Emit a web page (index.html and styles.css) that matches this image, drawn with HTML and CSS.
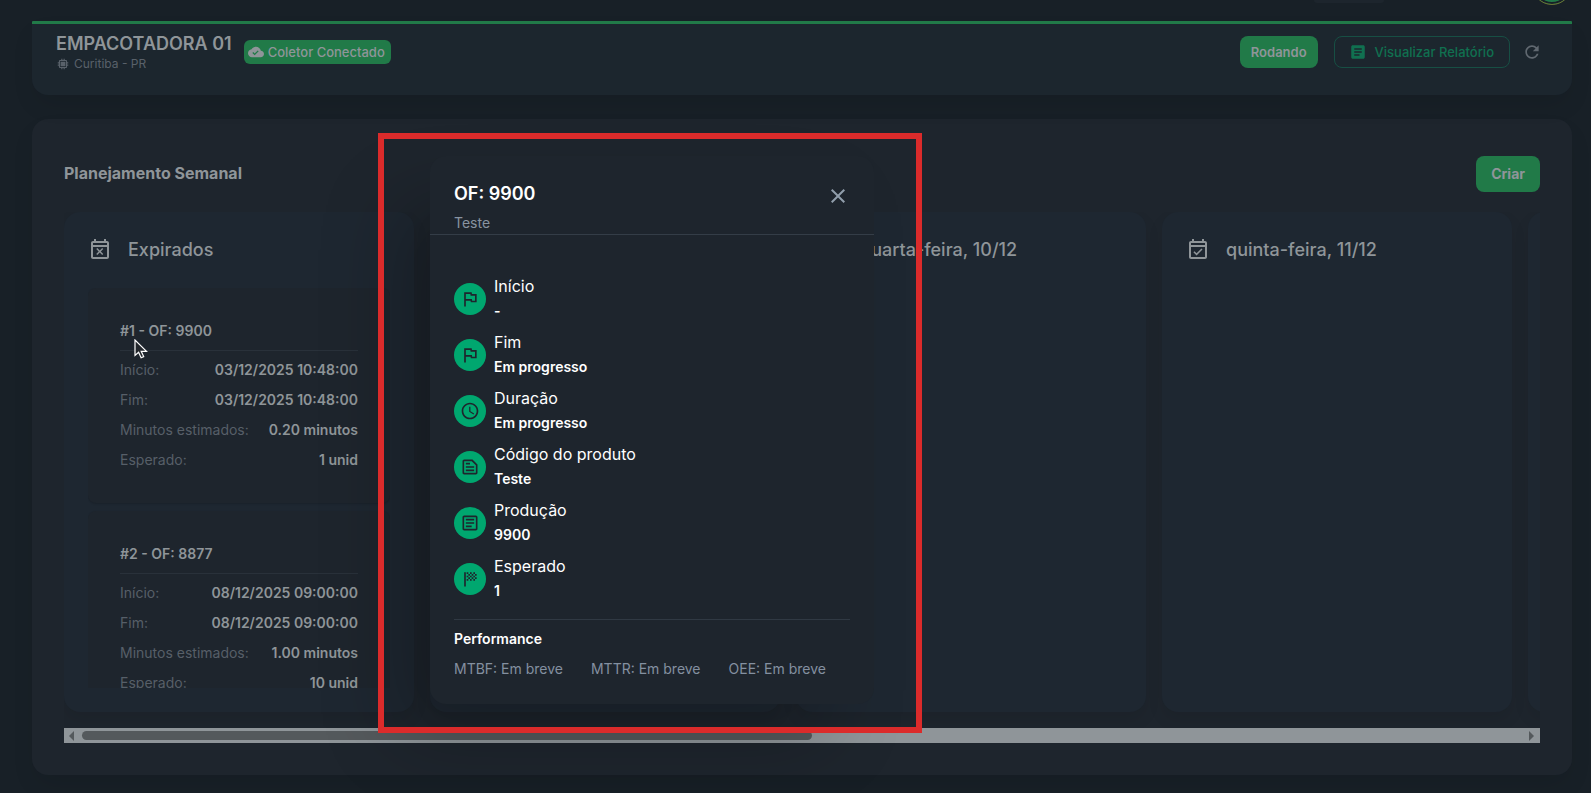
FILE: index.html
```html
<!DOCTYPE html>
<html lang="pt-BR">
<head>
<meta charset="utf-8">
<meta name="viewport" content="width=device-width, initial-scale=1">
<title>Empacotadora 01</title>
<link rel="stylesheet" href="styles.css">
</head>
<body>
<svg class="sprite" aria-hidden="true">
  <symbol id="i-flag" viewBox="0 0 24 24"><path d="m12.36 6 .4 2H18v6h-3.36l-.4-2H7V6h5.36M14 4H5v17h2v-7h5.6l.4 2h7V6h-5.6L14 4z"/></symbol>
  <symbol id="i-clock" viewBox="0 0 24 24"><path d="M11.99 2C6.47 2 2 6.48 2 12s4.47 10 9.99 10C17.52 22 22 17.52 22 12S17.52 2 11.99 2zM12 20c-4.42 0-8-3.58-8-8s3.58-8 8-8 8 3.58 8 8-3.58 8-8 8zm.5-13H11v6l5.25 3.15.75-1.23-4.5-2.67z"/></symbol>
  <symbol id="i-note" viewBox="0 0 24 24"><path d="M15 3H5c-1.100 0-1.990.9-1.990 2L3 19c0 1.100.89 2 1.990 2H19c1.100 0 2-.9 2-2V9l-6-6zM5 19V5h9l5 5v9H5zM7 7h5v2H7zm0 8h10v2H7zm0-4h10v2H7z"/></symbol>
  <symbol id="i-list" viewBox="0 0 24 24"><path d="M19 5v14H5V5h14m0-2H5c-1.100 0-2 .9-2 2v14c0 1.100.9 2 2 2h14c1.100 0 2-.9 2-2V5c0-1.100-.9-2-2-2zm-5 14H7v-2h7v2zm3-4H7v-2h10v2zm0-4H7V7h10v2z"/></symbol>
  <symbol id="i-finish" viewBox="0 0 24 24"><path d="M5 4h2v17H5zM8 4h2v2H8zm4 0h2v2h-2zm4 0h2v2h-2zm-6 2h2v2h-2zm4 0h2v2h-2zm4 0h2v2h-2zM8 8h2v2H8zm4 0h2v2h-2zm4 0h2v2h-2zm-6 2h2v2h-2zm4 0h2v2h-2zm4 0h2v2h-2zM8 12h2v2H8zm4 0h2v2h-2zm4 0h2v2h-2z"/></symbol>
  <symbol id="i-article" viewBox="0 0 24 24"><path d="M19 3H5c-1.100 0-2 .9-2 2v14c0 1.100.9 2 2 2h14c1.100 0 2-.9 2-2V5c0-1.100-.9-2-2-2zm-5 14H7v-2h7v2zm3-4H7v-2h10v2zm0-4H7V7h10v2z"/></symbol>
  <symbol id="i-refresh" viewBox="0 0 24 24"><path d="M17.650 6.350C16.200 4.900 14.210 4 12 4c-4.420 0-7.990 3.580-7.990 8s3.570 8 7.990 8c3.730 0 6.840-2.550 7.730-6h-2.080c-.82 2.330-3.040 4-5.650 4-3.310 0-6-2.690-6-6s2.690-6 6-6c1.660 0 3.140.69 4.220 1.780L13 11h7V4l-2.350 2.350z"/></symbol>
  <symbol id="i-cloud" viewBox="0 0 24 24"><path d="M19.350 10.040C18.670 6.590 15.640 4 12 4 9.110 4 6.600 5.640 5.350 8.040 2.340 8.360 0 10.910 0 14c0 3.310 2.690 6 6 6h13c2.760 0 5-2.240 5-5 0-2.640-2.050-4.780-4.650-4.960zM10 17l-3.500-3.500 1.410-1.410L10 14.170l4.600-4.600 1.410 1.410L10 17z"/></symbol>
  <symbol id="i-chip" viewBox="0 0 24 24"><path d="M8 8h8v8H8zM21 11V9h-2V7c0-1.100-.9-2-2-2h-2V3h-2v2h-2V3H9v2H7c-1.100 0-2 .9-2 2v2H3v2h2v2H3v2h2v2c0 1.100.9 2 2 2h2v2h2v-2h2v2h2v-2h2c1.100 0 2-.9 2-2v-2h2v-2h-2v-2h2zm-4 6H7V7h10v10z"/></symbol>
  <symbol id="i-busy" viewBox="0 0 24 24"><path d="M9.310 17l2.440-2.440L14.190 17l1.060-1.060-2.440-2.440 2.440-2.440L14.190 10l-2.440 2.440L9.310 10l-1.060 1.060 2.440 2.440-2.440 2.440L9.310 17zM19 3h-1V1h-2v2H8V1H6v2H5c-1.110 0-1.990.9-1.990 2L3 19c0 1.100.89 2 2 2h14c1.100 0 2-.9 2-2V5c0-1.100-.9-2-2-2zm0 16H5V9h14v10zM5 7V5h14v2H5z"/></symbol>
  <symbol id="i-avail" viewBox="0 0 24 24"><path d="M19 3h-1V1h-2v2H8V1H6v2H5c-1.110 0-2 .9-2 2v14c0 1.100.89 2 2 2h14c1.100 0 2-.9 2-2V5c0-1.100-.9-2-2-2zm0 16H5V9h14v10zM5 7V5h14v2H5zm5.560 10.460 5.940-5.930-1.070-1.060-4.870 4.870-2.110-2.110-1.060 1.060z"/></symbol>
  <symbol id="i-close" viewBox="0 0 24 24"><path d="M19 6.410 17.590 5 12 10.590 6.410 5 5 6.410 10.590 12 5 17.590 6.410 19 12 13.410 17.590 19 19 17.590 13.410 12z"/></symbol>
</svg>

<div class="topbar">
  <span class="topbar-chip"></span>
  <span class="avatar"></span>
</div>

<main class="page">
  <header class="machine">
    <div class="machine-id">
      <h1>EMPACOTADORA 01</h1>
      <p class="place"><svg class="icon s14"><use href="#i-chip"/></svg>Curitiba - PR</p>
    </div>
    <span class="badge"><svg class="icon s16"><use href="#i-cloud"/></svg>Coletor Conectado</span>
    <div class="actions">
      <button class="btn btn-state" type="button">Rodando</button>
      <button class="btn btn-outline" type="button"><svg class="icon s18"><use href="#i-article"/></svg>Visualizar Relatório</button>
      <button class="btn-icon" type="button" aria-label="Atualizar"><svg class="icon s20"><use href="#i-refresh"/></svg></button>
    </div>
  </header>

  <section class="plan">
    <div class="plan-head">
      <h2>Planejamento Semanal</h2>
      <button class="btn btn-create" type="button">Criar</button>
    </div>
    <div class="board">
      <section class="column">
        <h3><svg class="icon s24"><use href="#i-busy"/></svg>Expirados</h3>
        <div class="orders">
          <article class="order">
            <h4>#1 - OF: 9900</h4>
            <dl>
              <div><dt>Início:</dt><dd>03/12/2025 10:48:00</dd></div>
              <div><dt>Fim:</dt><dd>03/12/2025 10:48:00</dd></div>
              <div><dt>Minutos estimados:</dt><dd>0.20 minutos</dd></div>
              <div><dt>Esperado:</dt><dd>1 unid</dd></div>
            </dl>
          </article>
          <article class="order">
            <h4>#2 - OF: 8877</h4>
            <dl>
              <div><dt>Início:</dt><dd>08/12/2025 09:00:00</dd></div>
              <div><dt>Fim:</dt><dd>08/12/2025 09:00:00</dd></div>
              <div><dt>Minutos estimados:</dt><dd>1.00 minutos</dd></div>
              <div><dt>Esperado:</dt><dd>10 unid</dd></div>
            </dl>
          </article>
        </div>
      </section>
      <section class="column"></section>
      <section class="column">
        <h3><svg class="icon s24"><use href="#i-avail"/></svg>quarta-feira, 10/12</h3>
      </section>
      <section class="column">
        <h3><svg class="icon s24"><use href="#i-avail"/></svg>quinta-feira, 11/12</h3>
      </section>
      <section class="column"></section>
    </div>
    <div class="scrollbar">
      <svg class="arrow" viewBox="0 0 5 10"><path d="M5 0v10L0 5z"/></svg>
      <span class="track"><span class="thumb"></span></span>
      <svg class="arrow" viewBox="0 0 5 10"><path d="M0 0v10l5-5z"/></svg>
    </div>
  </section>
</main>

<div class="details" role="dialog" aria-labelledby="details-title">
  <header class="details-head">
    <div>
      <h2 id="details-title">OF: 9900</h2>
      <p>Teste</p>
    </div>
    <button class="close" type="button" aria-label="Fechar"><svg class="icon s24"><use href="#i-close"/></svg></button>
  </header>
  <div class="details-body">
    <ul class="facts">
      <li><span class="dot"><svg class="icon s20"><use href="#i-flag"/></svg></span><div><span>Início</span><strong>-</strong></div></li>
      <li><span class="dot"><svg class="icon s20"><use href="#i-flag"/></svg></span><div><span>Fim</span><strong>Em progresso</strong></div></li>
      <li><span class="dot"><svg class="icon s20"><use href="#i-clock"/></svg></span><div><span>Duração</span><strong>Em progresso</strong></div></li>
      <li><span class="dot"><svg class="icon s20"><use href="#i-note"/></svg></span><div><span>Código do produto</span><strong>Teste</strong></div></li>
      <li><span class="dot"><svg class="icon s20"><use href="#i-list"/></svg></span><div><span>Produção</span><strong>9900</strong></div></li>
      <li><span class="dot"><svg class="icon s20"><use href="#i-finish"/></svg></span><div><span>Esperado</span><strong>1</strong></div></li>
    </ul>
    <section class="performance">
      <h3>Performance</h3>
      <p><span>MTBF: Em breve</span><span>MTTR: Em breve</span><span>OEE: Em breve</span></p>
    </section>
  </div>
</div>

<div class="highlight"></div>
<svg class="cursor" viewBox="0 0 14 20"><path d="M1 1v15.500l3.600-3.300 2.500 5.600 2.600-1.200-2.500-5.300H12.500z"/></svg>
</body>
</html>
```

FILE: styles.css
```css
* { box-sizing: border-box; }

body {
  margin: 0;
  min-height: 100vh;
  position: relative;
  overflow: hidden;
  background: #182027;
  color: #8f9599;
  font: 14px/22px Inter, "Liberation Sans", sans-serif;
}

h1, h2, h3, h4, p, ul, dl, dd { margin: 0; padding: 0; }
ul { list-style: none; }
button { font: inherit; color: inherit; border: 0; background: none; padding: 0; }

.sprite { display: none; }
.icon { display: block; flex: none; fill: currentColor; }
.s14 { width: 14px; height: 14px; }
.s16 { width: 16px; height: 16px; }
.s18 { width: 18px; height: 18px; }
.s20 { width: 20px; height: 20px; }
.s24 { width: 24px; height: 24px; }

.topbar {
  height: 21px;
  padding-right: 19px;
  display: flex;
  justify-content: flex-end;
  align-items: flex-start;
  gap: 148px;
}
.topbar-chip { width: 70px; height: 3px; border-radius: 0 0 8px 8px; background: #1d252d; }
.avatar {
  width: 40px;
  height: 40px;
  margin-top: -35px;
  border: 1px solid #6b7434;
  border-radius: 50%;
  background: #217a48;
  box-shadow: inset 0 0 0 2px #182027;
}

.page { padding: 0 19px 18px 32px; display: flex; flex-direction: column; gap: 24px; }

.machine {
  position: relative;
  height: 74px;
  padding: 10px 22px 24px 24px;
  display: flex;
  align-items: flex-start;
  border-top: 3px solid #217a48;
  border-radius: 1px 1px 16px 16px;
  background: #1c262e;
  box-shadow: 0 12px 24px -4px rgba(0, 0, 0, .1);
}
.machine h1 { font-size: 18px; line-height: 20px; font-weight: 600; }
.place { display: flex; align-items: center; gap: 4px; font-size: 12px; line-height: 20px; color: #59616a; }
.badge {
  height: 24px;
  margin: 6px 0 0 12px;
  padding: 0 6px 0 4px;
  display: flex;
  align-items: center;
  gap: 4px;
  border-radius: 6px;
  background: #217a48;
  font-size: 13px;
  font-weight: 500;
}
.actions { margin-left: auto; display: flex; align-items: center; }
.btn { height: 32px; border-radius: 8px; font-size: 13px; font-weight: 600; }
.btn-state { padding: 0 11px; background: #217a48; }
.btn-outline {
  margin-left: 16px;
  padding: 0 15px 0 14px;
  display: flex;
  align-items: center;
  gap: 8px;
  border: 1px solid #174f44;
  color: #107050;
  font-weight: 500;
}
.btn-icon { margin-left: 4px; padding: 8px; color: #606870; }

.plan {
  padding: 37px 32px 32px;
  border-radius: 16px;
  background: #1e252d;
  box-shadow: 0 12px 24px -4px rgba(0, 0, 0, .1);
}
.plan-head { display: flex; justify-content: space-between; align-items: flex-start; margin-bottom: 20px; }
.plan-head h2 { font-size: 16px; line-height: 34px; font-weight: 700; }
.btn-create { height: 36px; padding: 0 15px; background: #217a48; font-size: 14px; font-weight: 700; }

.board { display: flex; gap: 16px; overflow: hidden; padding-bottom: 16px; }
.column {
  flex: 0 0 350px;
  height: 500px;
  padding: 24px;
  border-radius: 16px;
  background: #1e2731;
  box-shadow: 0 8px 16px 0 rgba(0, 0, 0, .08);
}
.column h3 {
  display: flex;
  align-items: center;
  gap: 16px;
  margin-bottom: 24px;
  font-size: 18px;
  line-height: 28px;
  font-weight: 500;
  white-space: nowrap;
}
.orders { height: 400px; overflow: hidden; display: flex; flex-direction: column; gap: 8px; }
.order {
  flex: none;
  padding: 32px;
  border-radius: 8px;
  background: #1e252d;
  box-shadow: 0 1px 2px rgba(0, 0, 0, .16);
}
.order h4 { padding-bottom: 8px; border-bottom: 1px solid #29313a; font-size: 14px; font-weight: 600; }
.order dl { padding-top: 8px; display: flex; flex-direction: column; gap: 8px; }
.order dl div { display: flex; justify-content: space-between; }
.order dt { color: #575f68; }
.order dd { font-weight: 600; }

.scrollbar { height: 15px; padding: 0 6px 0 5px; display: flex; align-items: center; gap: 8px; background: #8f9599; }
.arrow { width: 5px; height: 10px; flex: none; fill: #54595c; }
.track { flex: 1; }
.thumb { display: block; width: 730px; max-width: 100%; height: 9px; border-radius: 5px; background: #54595c; }

.details {
  position: absolute;
  left: 430px;
  top: 156px;
  width: 444px;
  border-radius: 16px;
  background: #1e252d;
  box-shadow: -40px 40px 80px -8px rgba(0, 0, 0, .24);
  color: #fff;
}
.details-head {
  padding: 24px 24px 0;
  display: flex;
  justify-content: space-between;
  align-items: flex-start;
  border-bottom: 1px solid #343d47;
}
.details-head h2 { font-size: 18px; line-height: 28px; font-weight: 600; }
.details-head p { padding-top: 4px; color: #8893a0; line-height: 22px; }
.close { padding-top: 4px; color: #919eab; }
.details-body { padding: 40px 24px 24px; }
.facts { display: flex; flex-direction: column; gap: 8px; }
.facts li { display: flex; align-items: center; gap: 8px; }
.facts li div { display: flex; flex-direction: column; gap: 2px; font-size: 16px; line-height: 22px; }
.facts strong { font-size: 14px; line-height: 24px; font-weight: 600; }
.dot {
  width: 32px;
  height: 32px;
  display: grid;
  place-items: center;
  border-radius: 50%;
  background: #00a76f;
  color: #1e252d;
}
.performance { margin-top: 16px; padding-top: 8px; border-top: 1px solid #303943; }
.performance h3 { font-size: 14px; font-weight: 600; }
.performance p { margin-top: 8px; display: flex; gap: 28px; color: #8490a0; }

.highlight {
  position: absolute;
  left: 378px;
  top: 133px;
  width: 544px;
  height: 600px;
  border: 6px solid #db2b2b;
  pointer-events: none;
}
.cursor {
  position: absolute;
  left: 134px;
  top: 339px;
  width: 14px;
  height: 20px;
  fill: #23272c;
  stroke: #fff;
  stroke-width: 1.2;
}
```
